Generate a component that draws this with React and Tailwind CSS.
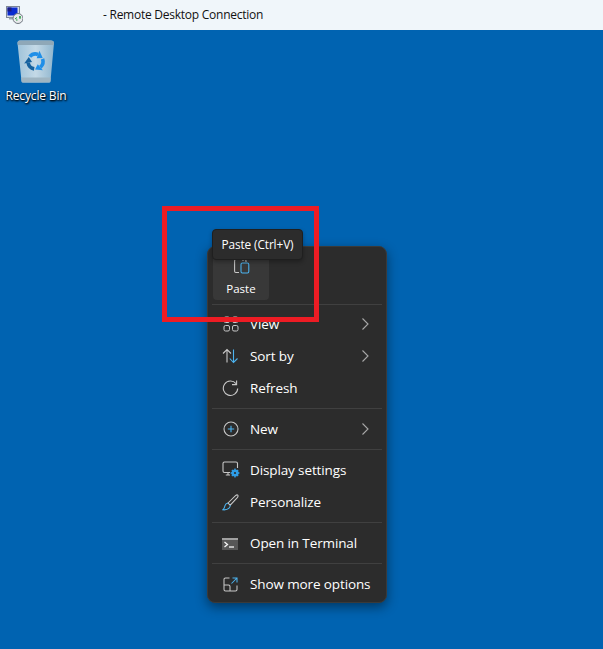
const font = { fontFamily: '"Open Sans", "Noto Sans", sans-serif' };

function Chevron() {
  return (
    <svg width="10" height="14" viewBox="0 0 10 14" fill="none" stroke="#a8a8a8" strokeWidth="1.1" className="ml-auto mr-[16px]">
      <path d="M2.5 1.5 L8 7 L2.5 12.5" />
    </svg>
  );
}

function Row({ icon, label, chevron }) {
  return (
    <div className="h-[32px] flex items-center text-white text-[13.5px] tracking-[-0.12px]">
      <div className="w-[42px] pl-[15px] flex items-center shrink-0">{icon}</div>
      <span className="whitespace-nowrap">{label}</span>
      {chevron && <Chevron />}
    </div>
  );
}

function Sep() {
  return <div className="h-px bg-[#404040] my-[4px] mx-[4px]" />;
}

const g = "#c8c8c8";
const b = "#4cb4f0";

const ViewIcon = (
  <svg width="16" height="16" viewBox="0 0 16 16" fill="none" stroke={g} strokeWidth="1">
    <rect x="1" y="1" width="5.5" height="5.5" rx="1.5" />
    <rect x="9.5" y="1" width="5.5" height="5.5" rx="1.5" />
    <rect x="1" y="9.5" width="5.5" height="5.5" rx="1.5" />
    <rect x="9.5" y="9.5" width="5.5" height="5.5" rx="1.5" />
  </svg>
);
const SortIcon = (
  <svg width="17" height="16" viewBox="0 0 17 16" fill="none" strokeWidth="1.1" className="-ml-[1px]">
    <path d="M5 14.5 V2 M1 5.5 L5 1.5 L9 5.5" stroke={g} />
    <path d="M11.5 1.5 V14 M7.8 10.5 L11.5 14.5 L15.5 10.5" stroke={b} />
  </svg>
);
const RefreshIcon = (
  <svg width="17" height="17" viewBox="0 0 17 17" fill="none" stroke={g} strokeWidth="1.1" className="-ml-[1px]">
    <path d="M14 3.6 A7.2 7.2 0 1 0 15.7 8.5" />
    <path d="M10 4.6 H14.6 V0.4" />
  </svg>
);
const NewIcon = (
  <svg width="16" height="16" viewBox="0 0 16 16" fill="none" strokeWidth="1.1">
    <circle cx="8" cy="8" r="7" stroke={g} />
    <path d="M8 4.8 V11.2 M4.8 8 H11.2" stroke={b} />
  </svg>
);
const DisplayIcon = (
  <svg width="18" height="18" viewBox="0 0 18 18" fill="none" className="-ml-[1px]">
    <path d="M8 11.5 H2.5 Q1 11.5 1 10 V2.5 Q1 1 2.5 1 H14 Q15.5 1 15.5 2.5 V7" stroke={g} strokeWidth="1.1" />
    <path d="M6 11.5 V14 M3.8 14 H8" stroke={g} strokeWidth="1.1" />
    <circle cx="13" cy="12" r="2.4" fill="none" stroke="#2f9ee8" strokeWidth="2.4" />
    <path d="M13 7.6 V16.4 M8.6 12 H17.4 M9.9 8.9 L16.1 15.1 M16.1 8.9 L9.9 15.1" stroke="#2f9ee8" strokeWidth="1.4" />
    <circle cx="13" cy="12" r="1.1" fill="#2c2c2c" />
  </svg>
);
const BrushIcon = (
  <svg width="17" height="17" viewBox="0 0 17 17" fill="none" strokeWidth="1.05" className="-ml-[1px]">
    <path d="M6 9 L13.5 1.6 Q15 0.4 15.8 1.2 Q16.5 2.2 15.3 3.6 L8.2 11.2 Z" stroke={g} />
    <path d="M6 9 Q3.6 9.4 3 11.6 Q2.6 14 0.8 15.8 Q5 16.2 7 14.2 Q8.4 12.8 8.2 11.2" stroke={b} />
  </svg>
);
const TermIcon = (
  <svg width="16" height="12" viewBox="0 0 16 12" className="mt-[1px] -ml-[1px]">
    <rect x="0" y="0" width="16" height="12" fill="#575757" />
    <rect x="0" y="0" width="16" height="2" fill="#a0a0a0" />
    <path d="M2.5 4 L5.5 6.5 L2.5 9" fill="none" stroke="#f6f6f6" strokeWidth="1.3" />
    <path d="M7 9 H12" stroke="#f6f6f6" strokeWidth="1.3" />
  </svg>
);
const MoreIcon = (
  <svg width="15" height="15" viewBox="0 0 15 15" fill="none" strokeWidth="1.05">
    <path d="M6.5 1 H2.5 Q1 1 1 2.5 V12.5 Q1 14 2.5 14 H12.5 Q14 14 14 12.5 V8.5" stroke={g} />
    <path d="M1 8 H5.5 Q7 8 7 9.5 V14" stroke={g} />
    <path d="M8.5 6.5 L14 1 M9.5 1 H14 V5.5" stroke={b} />
  </svg>
);
const PasteIcon = (
  <svg width="16" height="17" viewBox="0 0 16 17" fill="none" strokeWidth="1.05">
    <path d="M3.5 1.5 H1.8 Q0.6 1.5 0.6 2.7 V13.2 Q0.6 14.5 1.8 14.5 H5" stroke={g} />
    <path d="M3.5 0.8 H9 V3 M10 1.5 H11 Q12 1.5 12 2.7 V4" stroke={g} />
    <rect x="7" y="5" width="7.8" height="10" rx="1.4" stroke={b} />
  </svg>
);

function RdpIcon() {
  return (
    <svg width="17" height="18" viewBox="0 0 17 18">
      <rect x="0.5" y="0.5" width="13" height="11" fill="#d8dde6" stroke="#7d8796" />
      <rect x="1.5" y="1.5" width="10" height="8" fill="#0a2bd0" />
      <rect x="1.5" y="1.5" width="4" height="4" fill="#1c1c80" />
      <rect x="3" y="11.5" width="8" height="2" fill="#9aa3ad" />
      <circle cx="12" cy="12.5" r="5" fill="#e8eaec" stroke="#6f7780" />
      <path d="M9 13 L11 11.5 M10 14 L11.5 14 M13 11 L15 11 M14 10 L14 13" stroke="#1d9b3c" strokeWidth="1" />
    </svg>
  );
}

function RecycleArrow({ color, rot }) {
  return (
    <g transform={`rotate(${rot})`}>
      <path d="M-5.75 -4.82 A7.5 7.5 0 0 1 2.57 -7.05" fill="none" stroke={color} strokeWidth="3.6" />
      <path d="M1.2 -3.29 L3.93 -10.8 L7.2 -3.6 Z" fill={color} />
    </g>
  );
}

function BinIcon() {
  return (
    <svg width="38" height="44" viewBox="0 0 38 44">
      <defs>
        <linearGradient id="bin" x1="0" y1="0" x2="1" y2="0">
          <stop offset="0" stopColor="#9fc3da" />
          <stop offset="0.5" stopColor="#c4d9e6" />
          <stop offset="1" stopColor="#8fb6cf" />
        </linearGradient>
      </defs>
      <path d="M0.5 3 Q0.5 0.5 3 0.5 H34 Q37 0.5 37 3 L33.5 41 Q33.5 42.5 32 42.5 H6 Q4.5 42.5 4.5 41 Z" fill="url(#bin)" />
      <path d="M0.5 3 Q0.5 0.5 3 0.5 H34 Q37 0.5 37 3 L36.7 5 H0.8 Z" fill="#8fa8b8" />
      <path d="M4.2 37.5 H33.8 L33.5 41 Q33.5 42.5 32 42.5 H6 Q4.5 42.5 4.5 41 Z" fill="#9fb5c2" />
      <g transform="translate(18.5 21.5)">
        <RecycleArrow color="#1f8fe8" rot={0} />
        <RecycleArrow color="#1f8fe8" rot={120} />
        <RecycleArrow color="#16629f" rot={240} />
      </g>
    </svg>
  );
}

export default function App() {
  return (
    <div className="relative w-[603px] h-[649px] overflow-hidden bg-[#0063b1] flex flex-col" style={font}>
      <div className="h-[30px] bg-[#f0f6fa] flex items-center shrink-0 relative">
        <div className="pl-[6px] flex items-center"><RdpIcon /></div>
        <span className="ml-[80px] text-[12px] text-[#111] tracking-[-0.25px]">- Remote Desktop Connection</span>
      </div>

      <div className="w-[72px] flex flex-col items-center pt-[10px] shrink-0">
        <BinIcon />
        <span className="text-white text-[12px] tracking-[-0.15px] mt-[3px] [text-shadow:0_1px_2px_#000,1px_1px_2px_#000]">Recycle Bin</span>
      </div>

      {/* context menu */}
      <div className="absolute left-[207px] top-[246px] w-[180px] h-[357px] bg-[#2c2c2c] rounded-[8px] border border-[#3a3a3a] shadow-[0_4px_12px_rgba(0,0,0,0.45)]" >
        <div className="pt-[3px] px-[5px]">
          <div className="w-[56px] h-[50px] rounded-[4px] bg-[#383838] flex flex-col items-center justify-end pb-[3px] text-white text-[11.5px]">
            <div className="ml-[1px]">{PasteIcon}</div>
            <span className="mt-[5px]">Paste</span>
          </div>
        </div>
        <div className="h-px bg-[#404040] mt-[4px] mb-[3px] mx-[4px]" />
        <Row icon={ViewIcon} label="View" chevron />
        <Row icon={SortIcon} label="Sort by" chevron />
        <Row icon={RefreshIcon} label="Refresh" />
        <Sep />
        <Row icon={NewIcon} label="New" chevron />
        <Sep />
        <Row icon={DisplayIcon} label="Display settings" />
        <Row icon={BrushIcon} label="Personalize" />
        <Sep />
        <Row icon={TermIcon} label="Open in Terminal" />
        <Sep />
        <Row icon={MoreIcon} label="Show more options" />
      </div>

      {/* annotation */}
      <div className="absolute left-[162px] top-[206px] w-[157px] h-[116px] border-[5px] border-[#ed1c24]" />

      {/* tooltip */}
      <div className="absolute left-[212px] top-[229px] w-[91px] h-[31px] rounded-[4px] bg-[#2c2c2c] border border-[#1f1f1f] shadow-[0_2px_4px_rgba(0,0,0,0.3)] flex items-center justify-center text-white text-[11.8px] tracking-[-0.1px] whitespace-nowrap">
        Paste (Ctrl+V)
      </div>
    </div>
  );
}
